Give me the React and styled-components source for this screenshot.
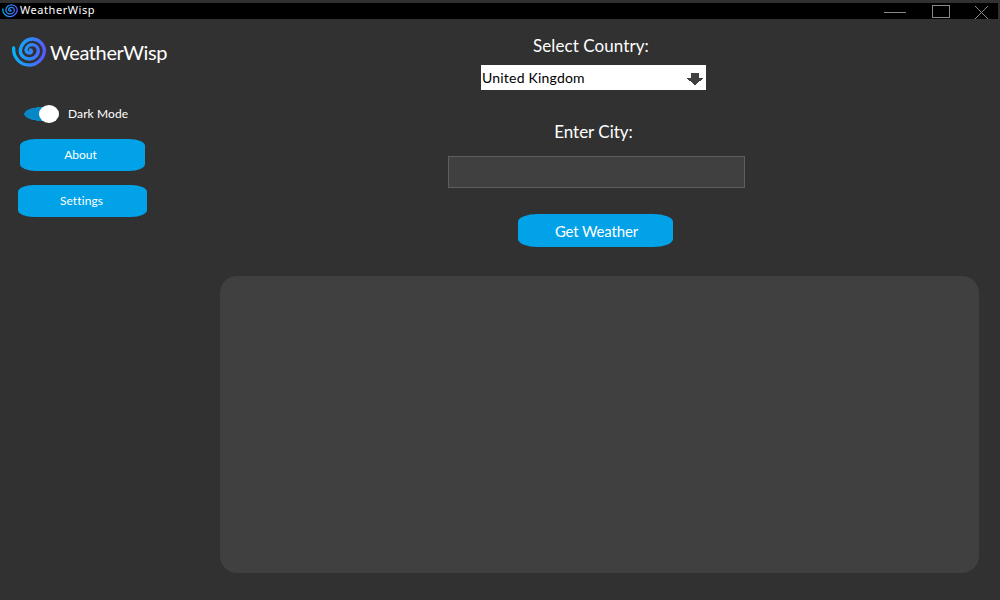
import React, { useState } from 'react';
import styled, { createGlobalStyle } from 'styled-components';

const GlobalStyle = createGlobalStyle`
  * { box-sizing: border-box; }
  body { margin: 0; background: #313131; }
`;

const Window = styled.div`
  width: 1000px;
  height: 600px;
  padding-top: 3px;
  overflow: hidden;
  background: #313131;
  color: #fff;
  font-family: Lato, Carlito, Calibri, sans-serif;
`;

const TitleBar = styled.header`
  display: flex;
  align-items: flex-start;
  width: 998px;
  height: 16px;
  padding-left: 2px;
  background: #000;
`;

const Text = styled.span`
  display: block;
  white-space: nowrap;
  font-size: ${(p) => p.$size}px;
  line-height: ${(p) => p.$line}px;
  letter-spacing: ${(p) => p.$spacing || 0}px;
`;

const AppName = styled(Text)`
  margin-left: 2px;
  flex: 1;
  font-family: "Noto Sans", sans-serif;
`;

const FieldLabel = styled(Text)`
  margin-right: ${(p) => p.$shift}px;
`;

const WindowControls = styled.svg`
  display: block;
  flex: none;
  margin-right: 8px;
`;

const Body = styled.div`
  display: grid;
  grid-template-columns: 220px 759px;
  height: 581px;
`;

const Sidebar = styled.aside`
  display: flex;
  flex-direction: column;
  align-items: flex-start;
  padding-top: 16px;
`;

const Brand = styled.div`
  display: flex;
  align-items: center;
  gap: 4px;
  height: 34px;
  margin-left: 12px;
`;

const Spiral = styled.svg`
  display: block;
  flex: none;
  margin-bottom: ${(p) => p.$lift}px;
  overflow: visible;
`;

const SwitchRow = styled.div`
  display: flex;
  align-items: center;
  gap: 9px;
  height: 18px;
  margin: 36px 0 16px 24px;
`;

const Switch = styled.button`
  display: flex;
  justify-content: flex-end;
  align-items: center;
  width: 35px;
  height: 18px;
  padding: 0;
  border: 0;
  background: radial-gradient(ellipse 18px 7px at 18px 9px, #0688c7 97%, transparent 100%);
`;

const Knob = styled.span`
  width: 20px;
  height: 18px;
  border-radius: 50%;
  background: #fff;
`;

const Button = styled.button`
  display: flex;
  align-items: center;
  justify-content: center;
  width: ${(p) => p.$width}px;
  height: ${(p) => p.$height}px;
  margin: ${(p) => p.$margin};
  padding: ${(p) => p.$padding || '0'};
  border: 0;
  border-radius: ${(p) => p.$radius || '16px / 7px'};
  background: #02a2e8;
  color: #fff;
  font-family: inherit;
`;

const Main = styled.main`
  display: flex;
  flex-direction: column;
`;

const Form = styled.form`
  display: flex;
  flex-direction: column;
  align-items: center;
  width: 297px;
  margin-left: 228px;
  padding-top: 15px;
`;

const Select = styled.div`
  display: flex;
  align-items: center;
  justify-content: space-between;
  width: 225px;
  height: 25px;
  margin: 7px 6px 30px 0;
  padding: 0 3px 0 1px;
  background: #fff;
  color: #000;
`;

const Arrow = styled.svg`
  display: block;
  margin-top: 3px;
  overflow: visible;
`;

const CityInput = styled.input`
  width: 297px;
  height: 32px;
  margin: 12px 0 26px;
  padding: 0 6px;
  border: 1px solid #5e5e5e;
  outline: 0;
  background: #404040;
  color: #fff;
  font: 17px Lato, sans-serif;
`;

const Results = styled.section`
  width: 759px;
  height: 297px;
  margin-top: 29px;
  border-radius: 17px;
  background: #404040;
`;

function Logo({ id, width, height, weight, lift = 0 }) {
  return (
    <Spiral $lift={lift} width={width} height={height} viewBox="12 36 34 31" preserveAspectRatio="none">
      <defs>
        <linearGradient id={id} gradientUnits="userSpaceOnUse" x1="12" y1="50" x2="46" y2="54">
          <stop offset="0" stopColor="#00b8fa" />
          <stop offset="0.5" stopColor="#2b8cff" />
          <stop offset="1" stopColor="#5a55ff" />
        </linearGradient>
      </defs>
      <path
        d="M13.7 49A15.3 15.6 0 0 0 44.5 51.5A12.2 13.2 0 0 0 20.3 51.5A9 8.5 0 0 0 38.3 51.5A6.2 6.5 0 0 0 26 51A3.3 3.3 0 0 0 31 53.5Q32.3 52 30.5 51"
        fill="none"
        stroke={`url(#${id})`}
        strokeWidth={weight}
        strokeLinecap="round"
      />
    </Spiral>
  );
}

export default function App() {
  const [city, setCity] = useState('');
  return (
    <>
      <GlobalStyle />
      <Window>
        <TitleBar>
          <Logo id="bar-logo" width={16} height={14} weight={2.8} />
          <AppName $size={11} $line={14} $spacing={0.55}>WeatherWisp</AppName>
          <WindowControls width="106" height="16" fill="none" stroke="#8a8a8a" shapeRendering="crispEdges">
            <path d="M0 9.5H22M48.5 2.5H65.5V14.5H48.5Z" />
            <path d="M91 3L104 16M104 3L91 16" shapeRendering="auto" />
          </WindowControls>
        </TitleBar>
        <Body>
          <Sidebar>
            <Brand>
              <Logo id="brand-logo" width={34} height={31} weight={3.3} lift={3} />
              <Text $size={20} $line={34} $spacing={-0.38}>WeatherWisp</Text>
            </Brand>
            <SwitchRow>
              <Switch aria-label="Dark Mode"><Knob /></Switch>
              <Text $size={12} $line={18} $spacing={0.1}>Dark Mode</Text>
            </SwitchRow>
            <Button $width={125} $height={32} $margin="0 0 0 20px" $padding="0 4px 0 0">
              <Text $size={12} $line={20}>About</Text>
            </Button>
            <Button $width={129} $height={32} $margin="14px 0 0 18px" $padding="0 2px 0 0">
              <Text $size={12} $line={20} $spacing={0.1}>Settings</Text>
            </Button>
          </Sidebar>
          <Main>
            <Form onSubmit={(e) => e.preventDefault()}>
              <FieldLabel $size={17} $line={24} $spacing={0.08} $shift={11}>Select Country:</FieldLabel>
              <Select>
                <Text $size={14} $line={25} $spacing={0.2}>United Kingdom</Text>
                <Arrow width="16" height="12" shapeRendering="crispEdges">
                  <path d="M4 0H12V5H16.5L8 12.4L-0.5 5H4Z" fill="#404040" />
                </Arrow>
              </Select>
              <FieldLabel $size={17} $line={24} $shift={6}>Enter City:</FieldLabel>
              <CityInput value={city} onChange={(e) => setCity(e.target.value)} />
              <Button $width={155} $height={33} $margin="0 2px 0 0" $padding="0 0 0 2px" $radius="20px / 8px">
                <Text $size={15} $line={24} $spacing={-0.15}>Get Weather</Text>
              </Button>
            </Form>
            <Results />
          </Main>
        </Body>
      </Window>
    </>
  );
}
